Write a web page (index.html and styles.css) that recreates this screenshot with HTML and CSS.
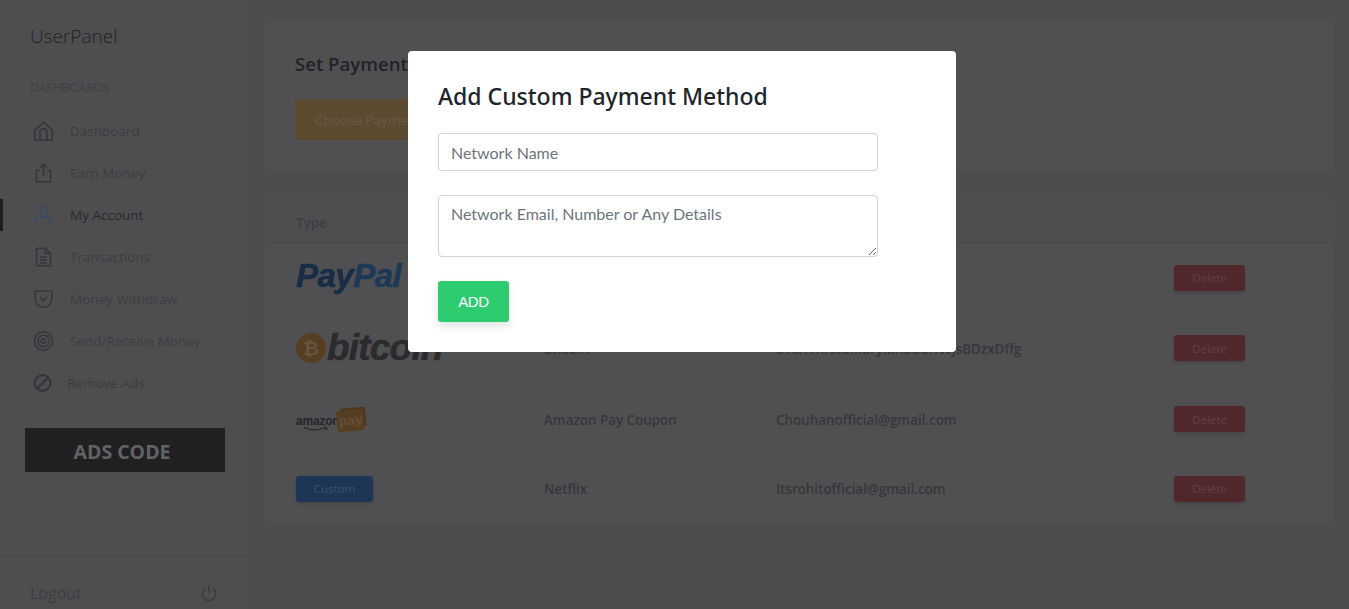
FILE: index.html
```html
<!DOCTYPE html>
<html lang="en">
<head>
    <meta charset="UTF-8">
    <meta name="viewport" content="width=device-width, initial-scale=1.0">
    <title>UserPanel - My Account</title>
    <link rel="stylesheet" href="styles.css">
</head>
<body>
    <div class="wrapper">
        <aside class="sidebar">
            <div class="brand">UserPanel</div>
            <div class="nav-title">DASHBOARDS</div>
            <nav class="nav">
                <a class="nav-item">
                    <svg class="nav-icon" viewBox="0 0 24 24"><path d="M2 11 12 2 22 11V22.5H2Z"/><path d="M8 22.5V13.5a4 4 0 0 1 8 0V22.5"/></svg>
                    <span>Dashboard</span>
                </a>
                <a class="nav-item">
                    <svg class="nav-icon" viewBox="0 0 24 24"><path d="M12 16V2M8 6l4-4 4 4"/><path d="M8 9H4V22H20V9H16"/></svg>
                    <span>Earn Money</span>
                </a>
                <a class="nav-item active">
                    <svg class="nav-icon" viewBox="0 0 24 24"><circle cx="12" cy="7" r="4"/><path d="M3.5 21v-2a5 5 0 0 1 5-5h7a5 5 0 0 1 5 5v2"/></svg>
                    <span>My Account</span>
                </a>
                <a class="nav-item">
                    <svg class="nav-icon" viewBox="0 0 24 24"><path d="M5 2H14L20 8V22H5A1 1 0 0 1 4 21V3A1 1 0 0 1 5 2Z"/><path d="M14 2V8H20M8 12H16M8 15.5H16M8 19H16"/></svg>
                    <span>Transactions</span>
                </a>
                <a class="nav-item">
                    <svg class="nav-icon" viewBox="0 0 24 24"><path d="M2.5 3H21.5V12a9.5 9.5 0 0 1-19 0Z"/><path d="M8 10l4 4 4-4"/></svg>
                    <span>Money Withdraw</span>
                </a>
                <a class="nav-item">
                    <svg class="nav-icon" viewBox="0 0 24 24"><circle cx="12" cy="12" r="10.5"/><circle cx="12" cy="12" r="6.5"/><circle cx="12" cy="12" r="2.6"/></svg>
                    <span>Send/Receive Money</span>
                </a>
                <a class="nav-item nav-item-tight">
                    <svg class="nav-icon nav-icon-thick" viewBox="0 0 24 24"><circle cx="11" cy="12" r="9"/><path d="M5 18 17 6"/></svg>
                    <span>Remove Ads</span>
                </a>
            </nav>
            <div class="ads-box">ADS CODE</div>
            <div class="logout">
                <span>Logout</span>
                <svg class="logout-icon" viewBox="0 0 24 24"><path d="M12 2V12"/><path d="M7 5.5a9 9 0 1 0 10 0"/></svg>
            </div>
        </aside>

        <main class="content">
            <section class="card method-card">
                <h2 class="card-title">Set Payment Method</h2>
                <button class="btn btn-amber">Choose Payment Method</button>
            </section>

            <section class="card table-card">
                <table class="method-table">
                    <thead>
                        <tr>
                            <th class="col-type">Type</th>
                            <th class="col-name"></th>
                            <th class="col-details"></th>
                            <th></th>
                        </tr>
                    </thead>
                    <tbody>
                        <tr class="row-paypal">
                            <td class="cell-logo"><span class="logo-paypal"><span class="pay">Pay</span><span class="pal">Pal</span></span></td>
                            <td class="cell-text">PayPal</td>
                            <td class="cell-text">Chouhanofficial@gmail.com</td>
                            <td><button class="btn-delete">Delete</button></td>
                        </tr>
                        <tr class="row-bitcoin">
                            <td class="cell-logo">
                                <span class="logo-bitcoin">
                                    <span class="btc-coin">₿</span>
                                    <span class="btc-word">bitcoin</span>
                                </span>
                            </td>
                            <td class="cell-text">Bitcoin</td>
                            <td class="cell-text">31cHYnAkumaryMn3uurNvjsBDzxDffg</td>
                            <td><button class="btn-delete">Delete</button></td>
                        </tr>
                        <tr class="row-amazon">
                            <td class="cell-logo">
                                <span class="logo-amazon">
                                    <span class="amazon-word">amazon
                                        <svg class="amazon-smile" viewBox="0 0 30 6"><path d="M3 1q12 6 23 0M26 0.5l2 2.5-3 .5"/></svg>
                                    </span>
                                    <span class="amazon-tag">pay</span>
                                </span>
                            </td>
                            <td class="cell-text">Amazon Pay Coupon</td>
                            <td class="cell-text">Chouhanofficial@gmail.com</td>
                            <td><button class="btn-delete">Delete</button></td>
                        </tr>
                        <tr class="row-custom">
                            <td class="cell-logo"><span class="badge-custom">Custom</span></td>
                            <td class="cell-text">Netflix</td>
                            <td class="cell-text">Itsrohitofficial@gmail.com</td>
                            <td><button class="btn-delete">Delete</button></td>
                        </tr>
                    </tbody>
                </table>
            </section>

            <footer class="page-footer"></footer>
        </main>
    </div>

    <div class="backdrop">
        <div class="modal">
            <h3 class="modal-title">Add Custom Payment Method</h3>
            <input class="field" type="text" placeholder="Network Name">
            <textarea class="field field-area" placeholder="Network Email, Number or Any Details"></textarea>
            <button class="btn-add">ADD</button>
        </div>
    </div>
</body>
</html>
```

FILE: styles.css
```css
* {
    box-sizing: border-box;
}

html, body {
    height: 100%;
}

body {
    margin: 0;
    overflow: hidden;
    font-family: "Open Sans", "Noto Sans", sans-serif;
    background: #9a9a9f;
    color: #5c5c64;
}

.wrapper {
    display: flex;
    height: 609px;
}

/* sidebar */
.sidebar {
    width: 250px;
    flex: none;
    display: flex;
    flex-direction: column;
    background: #9c9ca1;
    border-right: 1px solid #949499;
}

.brand {
    padding: 23px 0 0 30px;
    font-size: 19px;
    line-height: 27px;
    font-weight: 300;
    color: #44444c;
}

.nav-title {
    padding: 30px 0 0 30px;
    font-size: 12px;
    line-height: 16px;
    color: #808088;
}

.nav {
    display: flex;
    flex-direction: column;
    margin-top: 14px;
}

.nav-item {
    position: relative;
    display: flex;
    align-items: center;
    height: 42px;
    padding-left: 33px;
    font-size: 13.5px;
    color: #7a7a82;
}

.nav-item span {
    margin-left: 16px;
}

.nav-item.active {
    color: #54545c;
}

.nav-item.active::before {
    content: "";
    position: absolute;
    left: 0;
    top: 5px;
    width: 3px;
    height: 32px;
    background: #3c3c42;
}

.nav-item.active .nav-icon {
    stroke: #6c94d8;
}

.nav-item-tight span {
    margin-left: 13px;
}

.nav-icon {
    width: 21px;
    height: 22px;
    flex: none;
    fill: none;
    stroke: #6a6a74;
    stroke-width: 1.7;
}

.nav-icon-thick {
    stroke-width: 2.4;
}

.ads-box {
    margin: 24px 24px 0 25px;
    height: 44px;
    padding-right: 6px;
    background: #404046;
    color: #c4c4c4;
    font-size: 19.5px;
    font-weight: 700;
    line-height: 47px;
    text-align: center;
}

.logout {
    margin-top: auto;
    height: 54px;
    padding: 20px 31px 0 30px;
    display: flex;
    align-items: center;
    justify-content: space-between;
    border-top: 1px solid #949499;
    font-size: 16px;
    color: #7a7a82;
}

.logout-icon {
    width: 18px;
    height: 20px;
    fill: none;
    stroke: #74747c;
    stroke-width: 2;
}

/* main column */
.content {
    flex: 1;
    display: flex;
    flex-direction: column;
    padding: 22px 16px 0 15px;
}

.card {
    background: #a1a1a6;
    border-radius: 4px;
}

.method-card {
    height: 148px;
    padding: 29px 30px;
}

.card-title {
    margin: 0 0 23px;
    font-size: 18.6px;
    line-height: 25px;
    font-weight: 600;
    color: #44444c;
}

.btn {
    height: 41px;
    padding: 0 20px;
    border: none;
    border-radius: 3px;
    font-family: inherit;
    font-size: 13.5px;
}

.btn-amber {
    background: #b89660;
    color: #ccb896;
}

.table-card {
    margin-top: 26px;
    height: 326px;
    overflow: hidden;
}

.method-table {
    width: 100%;
    border-collapse: collapse;
    table-layout: fixed;
    font-size: 13.4px;
    font-weight: 600;
    color: #6e6e76;
}

.method-table th {
    height: 47px;
    padding: 8px 0 0 31px;
    text-align: left;
    font-size: 13.4px;
    font-weight: 600;
    color: #7a7a82;
    background: #9d9da2;
}

.col-type {
    width: 248px;
}

.col-name {
    width: 232px;
}

.col-details {
    width: 398px;
}

.method-table td {
    padding: 0 0 0 31px;
    border-top: 1px solid #9a9a9f;
    white-space: nowrap;
}

.method-table td.cell-text {
    padding-top: 2px;
}

.row-paypal td {
    height: 69px;
}

.row-paypal td.cell-logo {
    padding-bottom: 4px;
}

.row-bitcoin td {
    height: 72px;
}

.row-amazon td {
    height: 70px;
}

.row-amazon td.cell-logo {
    padding-top: 4px;
}

.row-custom td {
    height: 69px;
}

.row-custom td.cell-text {
    padding-top: 0;
}

.btn-delete {
    width: 71px;
    height: 26px;
    padding: 0;
    border: none;
    border-radius: 3px;
    background: #a05058;
    box-shadow: 0 2px 4px rgba(0, 0, 0, 0.15);
    color: #bc8488;
    font-family: inherit;
    font-size: 11.5px;
}

/* logos */
.logo-paypal {
    display: inline-block;
    font-family: "Liberation Sans", sans-serif;
    font-size: 33px;
    line-height: 34px;
    font-weight: 700;
    font-style: italic;
    letter-spacing: -0.5px;
    -webkit-text-stroke: 0.6px currentColor;
}

.pay {
    color: #2f5a8c;
}

.pal {
    color: #3c72ac;
}

.logo-bitcoin {
    display: inline-flex;
    align-items: center;
    gap: 1px;
}

.btc-coin {
    width: 30px;
    height: 30px;
    border-radius: 50%;
    background: #ac7c44;
    color: #c8a880;
    font-family: "DejaVu Sans", sans-serif;
    font-size: 19px;
    font-weight: 700;
    line-height: 30px;
    text-align: center;
}

.btc-word {
    font-family: "Liberation Sans", sans-serif;
    font-size: 37px;
    line-height: 36px;
    font-weight: 700;
    font-style: italic;
    letter-spacing: -0.8px;
    color: #56565c;
    -webkit-text-stroke: 0.6px currentColor;
}

.logo-amazon {
    display: inline-flex;
    align-items: flex-end;
    gap: 2px;
}

.amazon-word {
    position: relative;
    display: block;
    width: 39px;
    padding-bottom: 5px;
    font-family: "Liberation Sans", sans-serif;
    font-size: 12px;
    line-height: 12px;
    font-weight: 700;
    letter-spacing: -0.2px;
    color: #4c4c52;
}

.amazon-smile {
    position: absolute;
    left: 5px;
    bottom: 0;
    width: 28px;
    height: 6px;
    fill: none;
    stroke: #4c4c52;
    stroke-width: 1.2;
}

.amazon-tag {
    width: 27px;
    height: 21px;
    margin-bottom: 1px;
    border-radius: 2px;
    background: #ac7c44;
    box-shadow: 3px -3px 0 -1px #9a6e38;
    color: #c49c70;
    font-family: "Liberation Sans", sans-serif;
    font-size: 14px;
    font-weight: 700;
    line-height: 20px;
    text-align: center;
    transform: rotate(-5deg);
}

.badge-custom {
    display: inline-block;
    width: 77px;
    height: 26px;
    border-radius: 3px;
    background: #3c6cac;
    box-shadow: 0 2px 4px rgba(0, 0, 0, 0.15);
    color: #7c9ec8;
    font-size: 11.5px;
    font-weight: 400;
    line-height: 26px;
    text-align: center;
}

.page-footer {
    margin: auto -16px 0 -15px;
    height: 12px;
    border-top: 1px solid #949499;
}

/* modal */
.backdrop {
    position: fixed;
    inset: 0;
    padding: 51px 0 0 408px;
    background: rgba(0, 0, 0, 0.5);
}

.modal {
    display: flex;
    flex-direction: column;
    align-items: flex-start;
    width: 548px;
    height: 301px;
    padding: 30px;
    background: #fff;
    border-radius: 4px;
}

.modal-title {
    margin: 0 0 21px;
    font-family: "Noto Sans", "Open Sans", sans-serif;
    font-size: 23px;
    line-height: 31px;
    font-weight: 500;
    color: #212529;
}

.field {
    display: block;
    width: 440px;
    height: 38px;
    margin: 0 0 24px;
    padding: 6px 12px;
    background: #fff;
    border: 1px solid #ced4da;
    border-radius: 4px;
    font-family: "Lato", "Open Sans", sans-serif;
    font-size: 16px;
    line-height: 24px;
    color: #495057;
}

.field::placeholder {
    color: #6c757d;
    opacity: 1;
}

.field-area {
    height: 62px;
    resize: vertical;
}

.btn-add {
    width: 71px;
    height: 41px;
    padding: 0;
    border: none;
    border-radius: 3px;
    background: #2ecc71;
    box-shadow: 0 4px 8px rgba(0, 0, 0, 0.12);
    color: #fff;
    font-family: "Liberation Sans", sans-serif;
    font-size: 15px;
    letter-spacing: -0.4px;
}
```
